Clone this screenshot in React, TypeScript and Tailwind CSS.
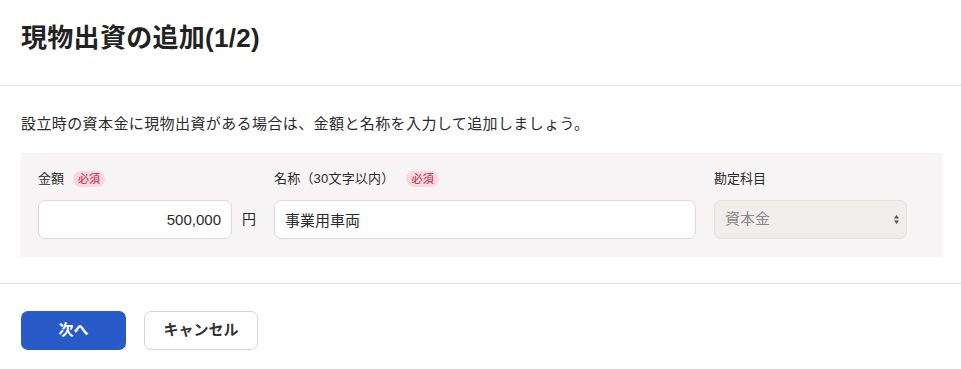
const font = { fontFamily: '"Liberation Sans", "Noto Sans CJK JP", sans-serif' };

function RequiredBadge({ className = 'ml-[9px]' }: { className?: string }) {
  return (
    <span
      className={`${className} inline-flex h-[16px] items-center rounded-full bg-[#fcd8de] px-[5px] text-[11px] leading-none text-[#b8203f]`}
    >
      必須
    </span>
  );
}

export default function App() {
  return (
    <div className="min-h-[369px] w-[961px] bg-white text-[#2b2b2b]" style={font}>
      {/* Header */}
      <div className="h-[86px] border-b border-[#e6e6e6] px-[21px] pt-[22px]">
        <h1 className="text-[26px] font-bold leading-[32px] tracking-[0.3px] text-[#222]">現物出資の追加(1/2)</h1>
      </div>

      {/* Body */}
      <div className="pl-[21px] pr-[19px]">
        <p className="mt-[27px] text-[15px] leading-[22px] tracking-[0.4px]">
          設立時の資本金に現物出資がある場合は、金額と名称を入力して追加しましょう。
        </p>

        <div className="mt-[18px] flex h-[104px] bg-[#f6f4f4] pl-[17px] pt-[16px]">
          {/* Amount */}
          <div className="w-[216px]">
            <div className="flex h-[20px] items-center text-[13px]">
              金額
              <RequiredBadge />
            </div>
            <div className="mt-[11px] flex items-center">
              <input
                readOnly
                value="500,000"
                className="h-[39px] w-[194px] rounded-[7px] border border-[#dadada] bg-white px-[10px] text-right text-[15px] outline-none"
                style={font}
              />
              <span className="ml-[10px] text-[14px]">円</span>
            </div>
          </div>

          {/* Name */}
          <div className="ml-[20px] w-[422px]">
            <div className="flex h-[20px] items-center text-[13px] tracking-[0.2px]">
              名称（30文字以内）
              <RequiredBadge className="ml-[12px]" />
            </div>
            <input
              readOnly
              value="事業用車両"
              className="mt-[11px] h-[39px] w-[422px] rounded-[7px] border border-[#dadada] bg-white px-[10px] text-[15px] outline-none"
              style={font}
            />
          </div>

          {/* Account */}
          <div className="ml-[18px] w-[193px]">
            <div className="flex h-[20px] items-center text-[13px]">勘定科目</div>
            <div className="mt-[11px] flex h-[39px] items-center justify-between rounded-[7px] border border-[#e3e2e1] bg-[#efeeed] pl-[10px] pr-[6px] text-[15px] text-[#888]">
              <span>資本金</span>
              <svg width="7" height="11" viewBox="0 0 7 11">
                <path d="M3.5 1 L6 4.5 H1 Z" fill="#555" />
                <path d="M3.5 10 L6 6.5 H1 Z" fill="#555" />
              </svg>
            </div>
          </div>
        </div>
      </div>

      {/* Footer */}
      <div className="mt-[26px] flex gap-[18px] border-t border-[#e6e6e6] px-[21px] pt-[27px]">
        <button className="h-[39px] w-[105px] rounded-[7px] bg-[#285bc8] text-[15px] font-bold text-white" style={font}>
          次へ
        </button>
        <button
          className="h-[39px] w-[114px] rounded-[7px] border border-[#d5d5d5] bg-white text-[15px] font-bold text-[#333]"
          style={font}
        >
          キャンセル
        </button>
      </div>
    </div>
  );
}
